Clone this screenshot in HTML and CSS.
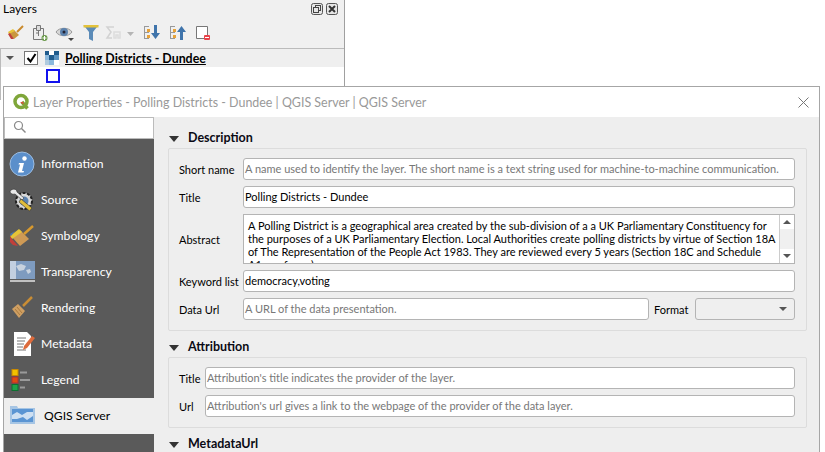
FILE: index.html
```html
<!DOCTYPE html>
<html lang="en">
<head>
<meta charset="utf-8">
<title>Layer Properties</title>
<link rel="stylesheet" href="styles.css">
</head>
<body>
<section class="layers">
  <header class="dock-title">
    <span>Layers</span>
    <span class="dock-btns">
      <svg width="12" height="12" viewBox="0 0 12 12"><rect x=".5" y=".5" width="11" height="11" rx="2" fill="#e6e6e6" stroke="#555"/><rect x="4.500" y="2.500" width="5" height="5" fill="none" stroke="#444"/><rect x="2.500" y="4.500" width="5" height="5" fill="#e6e6e6" stroke="#444"/></svg>
      <svg width="12" height="12" viewBox="0 0 12 12"><rect x=".5" y=".5" width="11" height="11" rx="2" fill="#e6e6e6" stroke="#555"/><path d="M3 3l6 6M9 3l-6 6" stroke="#333" stroke-width="2"/></svg>
    </span>
  </header>
  <div class="toolbar">
    <svg width="18" height="18" viewBox="0 0 18 18"><path d="M2 9l5-3 5 5-5 4z" fill="#c9973f"/><path d="M1 8l5-3 2 2-6 3z" fill="#e8c33a"/><path d="M1 10l2-1 4 6-3 0z" fill="#c0413a"/><path d="M10 8l6-6" stroke="#c98a2c" stroke-width="2"/></svg>
    <svg width="18" height="18" viewBox="0 0 18 18"><path d="M2.500 4.500h10v11h-10z" fill="#eee" stroke="#777"/><path d="M5.500 1.500h4v5h-4z" fill="#ddd" stroke="#777"/><path d="M7.500 6v6M5 9h3" stroke="#777"/><circle cx="13.500" cy="14" r="3" fill="#6a9a4a"/><path d="M11.500 14h4M13.500 12v4" stroke="#fff"/></svg>
    <svg width="22" height="18" viewBox="0 0 22 18"><path d="M1 8c3-5 13-5 16 0-3 5-13 5-16 0z" fill="#d6d6d6" stroke="#999"/><circle cx="9" cy="8" r="4" fill="#5c82ad"/><circle cx="9" cy="8" r="1.500" fill="#223"/><path d="M13 14h6l-3 3z" fill="#444"/></svg>
    <svg width="16" height="18" viewBox="0 0 16 18"><path d="M.5 1h15l-5.500 7v9l-4-2V8z" fill="#5b8bb8"/><rect x=".5" y="1" width="15" height="2.500" fill="#e3c23a"/></svg>
    <svg width="32" height="18" viewBox="0 0 32 18"><path d="M9 3H2l4 5-4 6h5" fill="none" stroke="#d2d2d2" stroke-width="1.500"/><path d="M9 8h6v6h-2v-3h-2v3H9z" fill="none" stroke="#dcdcdc" stroke-width="1.500"/><path d="M22 8h7l-3.500 4z" fill="#b5b5b5"/></svg>
    <svg width="18" height="18" viewBox="0 0 18 18"><path d="M1.500 2v13M1 2.500h5M1 8.500h5M1 14.500h5" stroke="#999" fill="none"/><rect x="4" y="5" width="3" height="3" fill="#e8a33a"/><rect x="4" y="11" width="3" height="3" fill="#e8a33a"/><path d="M11 1h3v8h3l-4.500 6L8 9h3z" fill="#3f74ab"/></svg>
    <svg class="t-shift" width="18" height="18" viewBox="0 0 18 18"><path d="M1.500 2v13M1 2.500h5M1 8.500h5M1 14.500h5" stroke="#999" fill="none"/><rect x="4" y="5" width="3" height="3" fill="#e8a33a"/><rect x="4" y="11" width="3" height="3" fill="#e8a33a"/><path d="M11 16h3V8h3l-4.500-6L8 8h3z" fill="#3f74ab"/></svg>
    <svg class="t-shift" width="16" height="18" viewBox="0 0 16 18"><path d="M1.500 2.500h11v12h-11z" fill="#fff" stroke="#777"/><rect x="9" y="11" width="6" height="5" rx="1" fill="#e8434a"/><path d="M10 13.500h4" stroke="#fff"/></svg>
  </div>
  <div class="tree">
    <div class="tree-row">
      <i class="tree-arrow"></i>
      <span class="check"><svg width="11" height="10" viewBox="0 0 11 10"><path d="M1.500 5l3 3.500L9.500 1" fill="none" stroke="#000" stroke-width="2"/></svg></span>
      <svg class="tree-icon" width="14" height="14" viewBox="0 0 14 14"><rect width="14" height="14" fill="#fff"/><rect width="4" height="4" fill="#1d5a8c"/><rect x="9" width="5" height="4" fill="#1d5a8c"/><rect x="4" y="4" width="5" height="5" fill="#1d5a8c"/><rect y="4" width="4" height="5" fill="#8ab8dc"/><rect x="9" y="4" width="5" height="5" fill="#5a92c0"/><rect x="4" y="9" width="5" height="5" fill="#8ab8dc"/><rect y="9" width="4" height="5" fill="#3a7cb0" opacity=".4"/></svg>
      <strong class="tree-name">Polling Districts - Dundee</strong>
    </div>
    <div class="tree-legend"><span class="swatch"></span></div>
  </div>
</section>

<div class="dialog">
  <header class="dlg-title">
    <svg class="qgis" width="18" height="18" viewBox="0 0 18 18"><circle cx="9" cy="8.500" r="6" fill="none" stroke="#7fa63a" stroke-width="3.500"/><path d="M10 9l5.500 6.500" stroke="#7fa63a" stroke-width="3.500"/><path d="M8 9.500l3-1 1 3z" fill="#d8503c"/></svg>
    <span class="dlg-name">Layer Properties - Polling Districts - Dundee | QGIS Server | QGIS Server</span>
    <svg class="dlg-close" width="11" height="11" viewBox="0 0 11 11"><path d="M.5.500l10 10M10.500.500l-10 10" stroke="#777"/></svg>
  </header>
  <div class="dlg-body">
    <aside class="side">
      <div class="search"><svg width="14" height="14" viewBox="0 0 14 14"><circle cx="5.500" cy="5.500" r="4" fill="none" stroke="#888" stroke-width="1.200"/><path d="M8.500 8.500l4 4" stroke="#888" stroke-width="1.400"/></svg></div>
      <nav class="nav">
        <a class="nav-item">
          <svg width="26" height="26" viewBox="0 0 26 26"><circle cx="13" cy="13" r="12" fill="#5b8fcb" stroke="#9dbde0"/><circle cx="15.500" cy="7.500" r="2.200" fill="#fff"/><path d="M10 12h5l-2 8h2l-.5 1.500H9l2-8H9.500z" fill="#fff"/></svg>
          <span>Information</span>
        </a>
        <a class="nav-item">
          <svg width="26" height="26" viewBox="0 0 26 26"><circle cx="15" cy="14" r="8" fill="#d8d8d8" stroke="#222" stroke-width="2" stroke-dasharray="3 1.500"/><circle cx="15" cy="14" r="4.500" fill="#5a82b0"/><path d="M1 4c3-3 7-2 7 1l7 6-2 2-7-6c-3 1-5-1-5-3" fill="#e8e8e8" stroke="#333" stroke-width=".6"/><path d="M12 12l11 9-2.500 3-10.500-9z" fill="#e0bc3a" stroke="#333" stroke-width=".6"/></svg>
          <span>Source</span>
        </a>
        <a class="nav-item">
          <svg width="26" height="26" viewBox="0 0 26 26"><path d="M3 14l8-7 9 9-9 7z" fill="#cf9a55"/><path d="M1 13l9-7 3 3-10 7z" fill="#e6c437"/><path d="M1 13l2 3 6 7-5-1-3-3z" fill="#c23f3a"/><path d="M15 11l9-8" stroke="#d99a2e" stroke-width="2.500"/><path d="M1 11l5-3-4 5z" fill="#4a78b0"/></svg>
          <span>Symbology</span>
        </a>
        <a class="nav-item">
          <svg width="26" height="26" viewBox="0 0 26 26"><rect x="1" y="2" width="25" height="18" fill="#7e9bbf"/><path d="M7 7l5-2 5 2-2 4-5 1zM17 11l4-1 1 3-3 2z" fill="#c8d2de"/><rect x="1" y="2" width="6" height="18" fill="#dfe6ee" opacity=".7"/><path d="M1 22h25" stroke="#e5e5e5" stroke-width="1.500"/></svg>
          <span>Transparency</span>
        </a>
        <a class="nav-item">
          <svg width="26" height="26" viewBox="0 0 26 26"><path d="M3 14l6-5 7 7-6 7z" fill="#cf9f62"/><path d="M6 14l5 6M8 12l5 6" stroke="#a97a3f"/><path d="M14 11l9-9" stroke="#c98d35" stroke-width="2.500"/></svg>
          <span>Rendering</span>
        </a>
        <a class="nav-item">
          <svg width="26" height="26" viewBox="0 0 26 26"><path d="M5 1h13l4 4v20H5z" fill="#fff"/><path d="M8 7h9M8 10h8M8 13h7M8 16h6M8 19h9" stroke="#777"/><path d="M14 19l1-4 8-10 3 2-8 10z" fill="#dd6b3c"/></svg>
          <span>Metadata</span>
        </a>
        <a class="nav-item">
          <svg width="26" height="26" viewBox="0 0 26 26"><rect x="3" y="2.500" width="6" height="6" fill="#f2c200" stroke="#c98a00"/><rect x="3" y="10" width="6" height="6" fill="#e04a12" stroke="#a33"/><rect x="3" y="17.500" width="6" height="6" fill="#1fa24a" stroke="#0c7030"/><path d="M11 5.500h7M11 13h10M11 20.500h5" stroke="#9a9a9a" stroke-width="2"/></svg>
          <span>Legend</span>
        </a>
        <a class="nav-item nav-active">
          <svg width="26" height="26" viewBox="0 0 26 26"><path d="M1 3h7l1 2h17v16H1z" fill="#a6c5e4"/><rect x="3" y="6" width="21" height="13" fill="#5b95d3"/><path d="M3 12l5-3 5 3 5-3 6 0v4l-6 4-4-3-6 2-5 0z" fill="#cfe0f2"/></svg>
          <span>QGIS Server</span>
        </a>
      </nav>
    </aside>
    <main class="main">
      <h2 class="sec-head"><i class="sec-arrow"></i>Description</h2>
      <div class="box">
        <div class="form form-desc">
          <label>Short name</label>
          <div class="field ph">A name used to identify the layer. The short name is a text string used for machine-to-machine communication.</div>
          <label>Title</label>
          <div class="field">Polling Districts - Dundee</div>
          <label>Abstract</label>
          <div class="area">
            <div class="area-text">A Polling District is a geographical area created by the sub-division of a a UK Parliamentary Constituency for<br>the purposes of a UK Parliamentary Election. Local Authorities create polling districts by virtue of Section 18A<br>of The Representation of the People Act 1983. They are reviewed every 5 years (Section 18C and Schedule<br>A1 as of now)</div>
            <div class="scroll">
              <span class="scroll-btn"><i class="up"></i></span>
              <span class="scroll-track"></span>
              <span class="scroll-btn"><i class="down"></i></span>
            </div>
          </div>
          <label>Keyword list</label>
          <div class="field">democracy,voting</div>
          <label>Data Url</label>
          <div class="url-row">
            <div class="field ph grow">A URL of the data presentation.</div>
            <label class="fmt">Format</label>
            <div class="combo"><i class="down"></i></div>
          </div>
        </div>
      </div>
      <h2 class="sec-head"><i class="sec-arrow"></i>Attribution</h2>
      <div class="box">
        <div class="form form-attr">
          <label>Title</label>
          <div class="field ph">Attribution's title indicates the provider of the layer.</div>
          <label>Url</label>
          <div class="field ph">Attribution's url gives a link to the webpage of the provider of the data layer.</div>
        </div>
      </div>
      <h2 class="sec-head"><i class="sec-arrow"></i>MetadataUrl</h2>
    </main>
  </div>
</div>
</body>
</html>
```
FILE: styles.css
```css
* { box-sizing: border-box; }
html, body { margin: 0; height: 100%; overflow: hidden; }
body {
  position: relative;
  width: 825px;
  height: 452px;
  background: #fff;
  font-family: Lato, "Noto Sans", sans-serif;
  font-size: 12px;
  color: #000;
}
svg { display: block; flex: none; }

.layers {
  width: 345px;
  height: 100px;
  background: #f0f0f0;
  border-right: 1px solid #a0a0a0;
}
.dock-title {
  height: 17px;
  padding: 0 4px 0 3px;
  display: flex;
  justify-content: space-between;
  align-items: center;
}
.dock-btns { display: flex; gap: 3px; margin-right: 2px; }
.toolbar {
  height: 31px;
  display: flex;
  align-items: center;
  gap: 6px;
  padding: 0 0 0 7px;
}
.t-shift { margin-left: 2px; }
.tree {
  height: 52px;
  background: #fff;
  border-top: 1px solid #bbb;
  border-left: 1px solid #bbb;
}
.tree-row {
  height: 18px;
  background: #efefef;
  display: flex;
  align-items: center;
  padding-left: 5px;
}
.tree-arrow {
  width: 0; height: 0;
  border: 4px solid transparent;
  border-top: 4px solid #555;
  border-bottom: 0;
}
.check {
  width: 14px; height: 14px;
  margin-left: 10px;
  background: #fff;
  border: 1px solid #777;
  display: flex;
  align-items: center;
  justify-content: center;
}
.tree-icon { margin-left: 7px; }
.tree-name {
  margin-left: 6px;
  font-size: 12.4px;
  font-weight: 700;
  text-decoration: underline;
}
.tree-legend { height: 20px; padding: 2px 0 0 45px; }
.swatch { display: block; width: 14px; height: 14px; border: 2px solid #1212ee; background: #fff; }

.dialog {
  position: absolute;
  left: 3px;
  top: 86px;
  width: 817px;
  height: 366px;
  overflow: hidden;
  background: #eee;
  border: 1px solid #a6a6a6;
  border-bottom: 0;
}
.dlg-title {
  height: 30px;
  background: #fff;
  display: flex;
  align-items: center;
  padding: 0 10px 0 8px;
  color: #999;
  font-size: 12.45px;
}
.qgis { margin-right: 3px; }
.dlg-name { flex: 1; }
.dlg-body { display: flex; height: 336px; }
.side { width: 150px; flex: none; }
.search {
  height: 22px;
  background: #fff;
  border: 1px solid #bbb;
  padding: 2px 0 0 8px;
}
.nav { height: 314px; background: #5a5a5a; padding-top: 7px; font-size: 12.2px; }
.nav-item {
  height: 36px;
  display: flex;
  align-items: center;
  gap: 6px;
  padding-left: 5px;
  color: #fff;
}
.nav-item span { margin-top: -2px; }
.nav-active { background: #eee; color: #000; gap: 9px; }

.main { flex: 1; padding: 0 12px 0 14px; overflow: hidden; font-size: 11px; }
.sec-head {
  margin: 0;
  height: 19px;
  display: flex;
  align-items: center;
  font-size: 12.5px;
  font-weight: 700;
  color: #0a0a14;
  gap: 9px;
  padding-left: 1px;
}
.sec-arrow {
  width: 0; height: 0;
  border-left: 5.5px solid transparent;
  border-right: 5.5px solid transparent;
  border-top: 6px solid #333;
  margin-top: 2px;
}
.main > .sec-head:first-child { margin-top: 11px; }
.box {
  margin-top: 1px;
  border: 1px solid #dcdcdc;
  border-radius: 2px;
  padding: 9px 11px 10px 10px;
}
.box + .sec-head { margin-top: 6px; }
.form { display: grid; row-gap: 6px; align-items: center; }
.form-desc { grid-template-columns: 64px 1fr; }
.form-attr { grid-template-columns: 26px 1fr; }
.form label { color: #000; white-space: nowrap; }
.field {
  height: 22px;
  background: #fff;
  border: 1px solid #b4b4b4;
  border-radius: 3px;
  padding: 0 1px;
  line-height: 20px;
  white-space: nowrap;
  overflow: hidden;
}
.ph { color: #777; }
.grow { flex: 1; min-width: 0; }
.area {
  height: 50px;
  background: #fff;
  border: 1px solid #b4b4b4;
  display: flex;
  overflow: hidden;
}
.area-text {
  flex: 1;
  padding: 4px 4px 0;
  line-height: 13px;
  white-space: nowrap;
  overflow: hidden;
}
.scroll {
  width: 15px;
  flex: none;
  border-left: 1px solid #ccc;
  display: flex;
  flex-direction: column;
  background: #f0f0f0;
}
.scroll-btn {
  height: 14px;
  background: #fff;
  display: flex;
  align-items: center;
  justify-content: center;
}
.scroll-track { flex: 1; }
.up, .down { width: 0; height: 0; border-left: 4px solid transparent; border-right: 4px solid transparent; }
.up { border-bottom: 4px solid #555; }
.down { border-top: 4px solid #555; }
.url-row { display: flex; align-items: center; }
.form label.fmt { width: 46px; flex: none; padding-left: 5px; }
.combo {
  width: 100px;
  height: 22px;
  background: #efefef;
  border: 1px solid #b4b4b4;
  border-radius: 3px;
  display: flex;
  align-items: center;
  justify-content: flex-end;
  padding-right: 7px;
}
```
